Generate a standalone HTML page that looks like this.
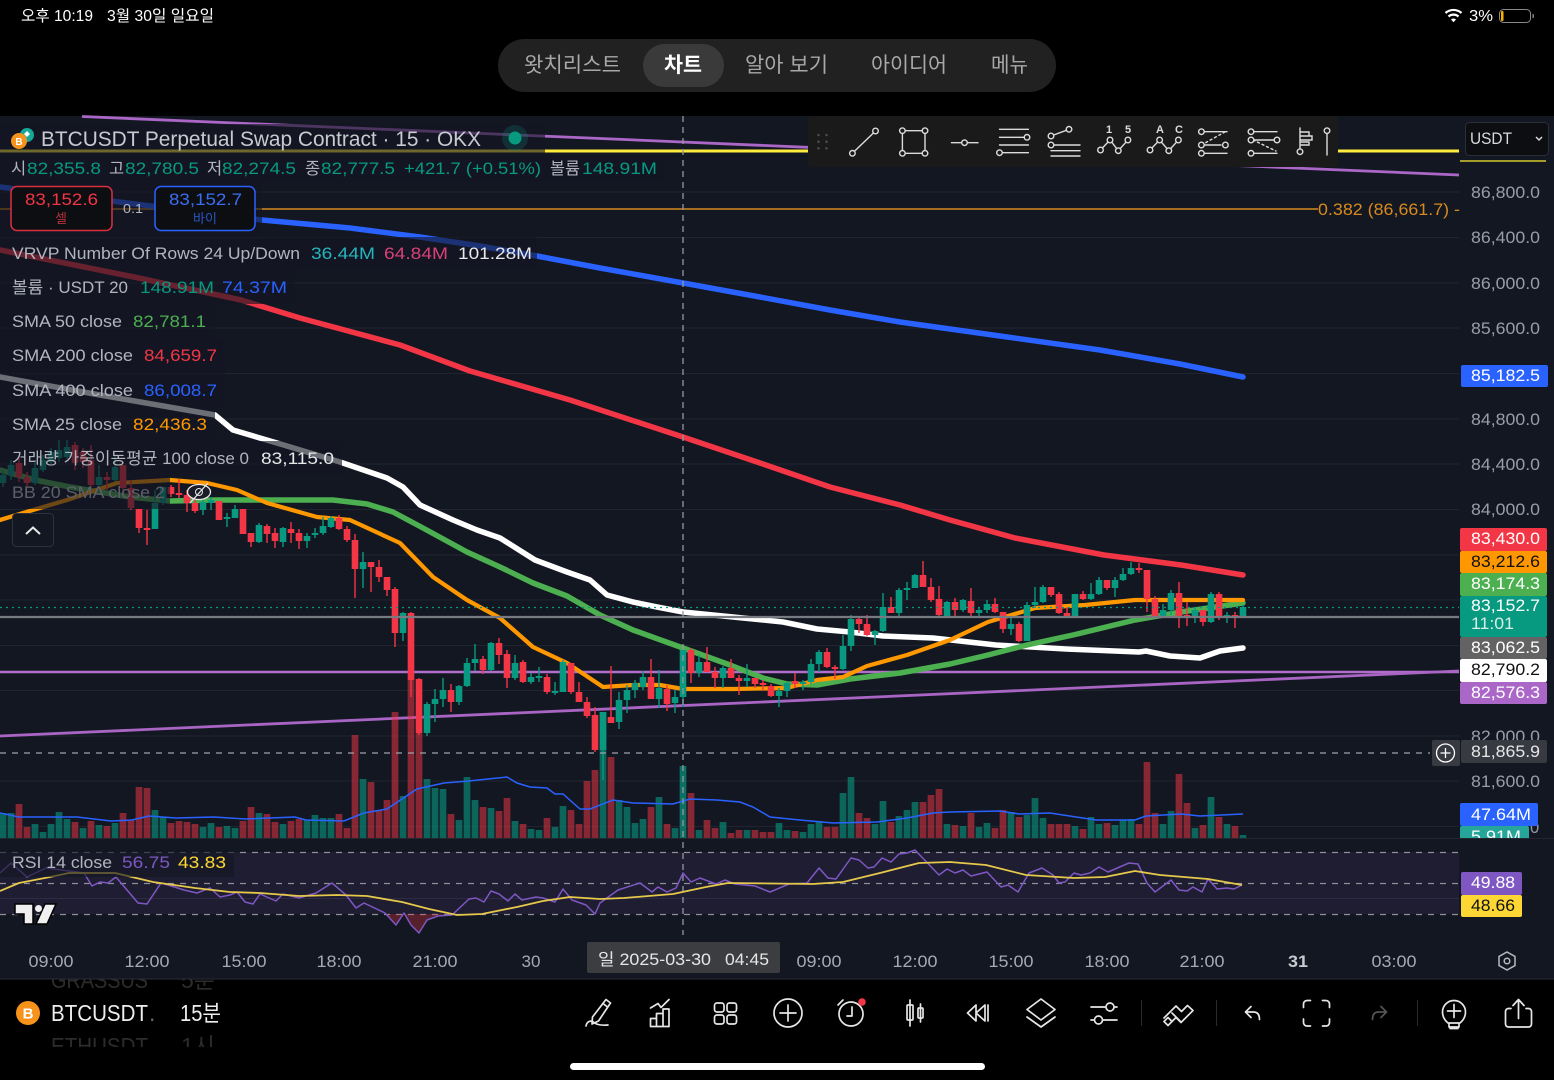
<!DOCTYPE html>
<html lang="ko"><head><meta charset="utf-8"><title>BTCUSDT</title>
<style>
html,body{margin:0;padding:0;background:#000;width:1554px;height:1080px;overflow:hidden}
svg{display:block}
text{font-family:"Liberation Sans","Noto Sans CJK KR",sans-serif}
.p{font-size:16.500px}
.l{font-size:16.500px;fill:#b2b5be}
.t{font-size:16.500px;fill:#a6a9b2;text-anchor:middle}
.i{fill:none;stroke:#e6e6e6;stroke-width:1.7;stroke-linecap:round;stroke-linejoin:round}
.d{fill:none;stroke:#dcdcdc;stroke-width:1.4;stroke-linecap:round}
.d circle,circle.c{fill:#1a1a1a}
</style></head><body>
<svg width="1554" height="1080" viewBox="0 0 1554 1080" xmlns="http://www.w3.org/2000/svg">
<defs><clipPath id="eth"><rect x="0" y="1030" width="400" height="17"/></clipPath></defs>
<rect width="1554" height="1080" fill="#000"/>

<!-- status bar -->
<text x="21" y="21" font-size="15.5" fill="#fff" textLength="72" lengthAdjust="spacingAndGlyphs">오후 10:19</text>
<text x="107" y="21" font-size="15.5" fill="#fff" textLength="107" lengthAdjust="spacingAndGlyphs">3월 30일 일요일</text>
<g fill="none" stroke="#fff" stroke-width="2.2" stroke-linecap="butt"><path d="M1445.500 13a12 12 0 0 1 16 0"/><path d="M1448.500 16.500a7.500 7.500 0 0 1 10 0"/></g><path d="M1451 19.500a3.500 3.500 0 0 1 5 0l-2.500 2.800z" fill="#fff"/>
<text x="1469" y="21" font-size="15.5" fill="#fff" textLength="24" lengthAdjust="spacingAndGlyphs">3%</text>
<rect x="1499.500" y="9.500" width="31" height="13" rx="4" fill="none" stroke="#8a8a8a"/><rect x="1501" y="11" width="2.500" height="10" rx="1" fill="#f5b400"/><path d="M1532.500 13.500v5a2.500 2.500 0 0 0 1.500-2.500 2.500 2.500 0 0 0-1.500-2.500z" fill="#8a8a8a"/>

<!-- nav -->
<rect x="498" y="39" width="558" height="53" rx="26.500" fill="#212121"/>
<rect x="643" y="44" width="81" height="43" rx="21.500" fill="#3a3a3a"/>
<text x="524" y="72" font-size="21" fill="#a8a8a8" textLength="97" lengthAdjust="spacingAndGlyphs">왓치리스트</text>
<text x="664" y="72" font-size="21" font-weight="bold" fill="#fff" textLength="38" lengthAdjust="spacingAndGlyphs">차트</text>
<text x="745" y="72" font-size="21" fill="#a8a8a8" textLength="83" lengthAdjust="spacingAndGlyphs">알아 보기</text>
<text x="871" y="72" font-size="21" fill="#a8a8a8" textLength="76" lengthAdjust="spacingAndGlyphs">아이디어</text>
<text x="991" y="72" font-size="21" fill="#a8a8a8" textLength="37" lengthAdjust="spacingAndGlyphs">메뉴</text>

<!-- lower dim list (behind chart) -->
<text x="51" y="988" font-size="23" fill="#2c2c2c" textLength="97" lengthAdjust="spacingAndGlyphs">GRASSUS</text><text x="181" y="988" font-size="23" fill="#2c2c2c">5분</text>

<!-- chart -->
<rect x="0" y="116" width="1554" height="863" fill="#131722"/>
<path d="M0 192H1459M0 237.500H1459M0 283H1459M0 328H1459M0 373.500H1459M0 419H1459M0 464H1459M0 509.500H1459M0 555H1459M0 600H1459M0 645.500H1459M0 690.500H1459M0 736H1459M0 781H1459M0 826.500H1459" stroke="#20242e" stroke-width="1"/>
<path d="M0 838.500H1554" stroke="#22262f" stroke-width="1"/>
<path d="M0 979H1554" stroke="#2a2e39" stroke-width="1"/>

<!-- RSI band -->
<rect x="0" y="852" width="1459" height="62" fill="#7e57c2" fill-opacity=".1"/>
<path d="M0 898.500H1459" stroke="#2c2a44"/>
<path d="M0 852.500H1459M0 883.500H1459M0 914.500H1459" stroke="#8d8f99" stroke-width="1.2" stroke-dasharray="6 6"/>

<!-- upper lines -->
<path d="M82 116.500L1459 175" stroke="#ab67c7" stroke-width="2.800"/>
<path d="M0 151H1459" stroke="#ffeb3b" stroke-width="3"/>
<path d="M1460 161H1546" stroke="#d7c92f" stroke-width="1.500"/>
<path d="M0 209H1318" stroke="#d68a1e" stroke-width="1.600"/>
<path d="M0 672H1459" stroke="#b06fcb" stroke-width="2.400"/>
<path d="M0 736L1459 671" stroke="#a965c4" stroke-width="2.800"/>

<!-- MAs -->
<g fill="none" stroke-linecap="round" stroke-linejoin="round">
<polyline stroke="#2962ff" stroke-width="5.500" points="0,187 262,220 350,228 420,237 480,246 537,256 600,268 683,283 760,297 830,310 900,322 1000,336 1100,350 1180,364 1243,377"/>
<polyline stroke="#f23645" stroke-width="5.500" points="0,250 134,277 241,300 300,318 400,345 470,371 570,400 683,437 760,463 830,487 900,505 950,520 1015,538 1104,555 1181,565 1243,575"/>
<polyline stroke="#ffffff" stroke-width="5.500" points="0,377 100,395 215,415 233,430 277,443 340,462 387,478 403,487 420,505 453,520 477,530 500,538 535,560 567,572 590,580 607,595 633,602 657,607 683,612 733,617 783,622 817,629 850,632 883,636 933,638 996,645 1066,649 1139,652 1146,651 1170,656 1200,658 1220,651 1243,648"/>
<polyline stroke="#4caf50" stroke-width="5.500" points="0,470 35,480 70,487 100,492 130,497 170,501 217,500 333,500 367,504 393,512 423,528 467,552 500,567 533,583 567,596 600,615 633,630 683,648 730,665 763,678 787,684 817,685 850,679 900,673 950,664 988,655 1027,645 1073,635 1135,620 1181,612 1243,603"/>
<polyline stroke="#ff9800" stroke-width="4.200" points="0,520 33,510 67,500 117,483 170,480 207,483 237,490 267,503 317,517 350,520 400,543 433,577 467,600 500,618 533,647 567,663 603,687 633,685 660,685 683,689 733,689 787,688 817,680 843,677 867,666 907,655 950,640 988,622 1035,608 1085,605 1135,600 1204,600 1243,600"/>
</g>

<!-- candles green -->
<path fill="none" stroke="#089981" stroke-width="1.400" d="M3 470V487M11 460V480M35 462V485M43 455V472M51 448V465M59 440V462M67 440V459M99 465V493M115 455V482M155 490V529M163 487V505M203 500V515M211 497V510M227 513V527M235 505V518M259 523V543M283 527V547M307 533V548M315 528V538M323 517V535M331 516V528M363 552V588M403 612V641M427 702V736M435 689V722M443 678V707M459 685V705M467 658V687M475 644V671M491 642V671M515 655V680M531 673V684M539 667V682M555 682V695M563 660V692M603 712V780M619 692V729M627 685V713M635 680V698M643 671V690M659 670V708M675 690V713M683 648V707M699 655V677M723 666V688M747 664V687M779 688V707M787 682V697M803 680V690M811 659V684M819 650V672M843 635V670M851 615V651M875 630V645M883 593V632M899 588V618M907 582V600M915 574V588M947 601V618M963 599V612M979 608V616M987 600V613M1011 618V635M1027 602V641M1035 587V608M1043 585V603M1075 594V616M1091 583V600M1099 577V595M1115 577V597M1123 568V581M1131 562V575M1163 604V617M1171 590V615M1195 607V623M1211 592V623M1227 612V623M1243 605V617"/>
<path fill="none" stroke="#089981" stroke-width="6.600" d="M3 475V483M11 465V475M35 468V483M43 460V470M51 452V462M59 450V458M67 447V457M99 477V485M115 467V480M155 503V529M163 487V503M203 502V510M211 500V503M227 517V519M235 509V518M259 525V542M283 528V542M307 536V541M315 533V535M323 526V533M331 518V527M363 562V569M403 613V633M427 704V733M435 699V704M443 690V699M459 686V702M467 663V686M475 659V663M491 643V670M515 663V678M531 677V682M539 676V678M555 691V693M563 662V692M603 712V750M619 700V722M627 690V700M635 683V690M643 677V687M659 688V699M675 697V703M683 650V697M699 662V673M723 668V678M747 678V681M779 691V696M787 683V691M803 682V684M811 664V682M819 652V664M843 646V669M851 619V646M875 631V635M883 607V631M899 590V613M907 588V590M915 575V588M947 602V617M963 600V610M979 610V613M987 604V610M1011 624V629M1027 605V641M1035 602V605M1043 587V602M1075 594V616M1091 594V599M1099 580V594M1115 580V588M1123 574V580M1131 568V574M1163 610V616M1171 593V610M1195 610V616M1211 594V622M1227 615V617M1243 607V616"/>
<!-- candles red -->
<path fill="none" stroke="#f23645" stroke-width="1.400" d="M19 455V482M27 472V487M75 442V470M83 448V468M91 445V487M107 472V490M123 465V490M131 480V510M139 509V533M147 510V545M171 485V497M179 479V498M187 490V512M195 492V513M219 501V520M243 509V534M251 533V547M267 524V543M275 528V548M291 522V543M299 529V549M339 515V530M347 526V542M355 534V598M371 562V592M379 560V582M387 577V596M395 587V647M411 612V697M419 678V735M451 684V712M483 656V674M499 638V664M507 650V688M523 660V683M547 674V694M571 663V694M579 682V702M587 697V718M595 707V752M611 666V723M651 659V699M667 685V711M691 648V683M707 647V672M715 667V688M731 659V678M739 675V695M755 678V688M763 680V690M771 684V697M795 673V688M827 648V668M835 665V679M859 616V633M867 615V636M891 597V613M923 561V587M931 578V602M939 586V617M955 598V616M971 588V616M995 598V613M1003 612V633M1019 622V642M1051 587V597M1059 592V614M1067 607V617M1083 591V600M1107 580V590M1139 563V573M1147 570V612M1155 596V617M1179 582V628M1187 602V626M1203 610V626M1219 592V620M1235 612V628"/>
<path fill="none" stroke="#f23645" stroke-width="6.600" d="M19 463V477M27 477V483M75 445V463M83 452V462M91 460V485M107 477V480M123 465V488M131 488V508M139 509V528M147 528V530M171 487V494M179 493V495M187 495V503M195 503V511M219 501V520M243 509V534M251 533V542M267 526V534M275 533V541M291 529V533M299 533V541M339 518V529M347 529V540M355 540V569M371 562V567M379 567V577M387 577V590M395 589V633M411 613V680M419 679V733M451 690V702M483 659V670M499 643V655M507 654V678M523 662V682M547 677V692M571 663V692M579 692V702M587 702V716M595 715V750M611 717V723M651 677V699M667 689V704M691 650V673M707 662V672M715 672V678M731 668V678M739 678V681M755 678V684M763 683V685M771 686V696M795 681V684M827 652V667M835 667V669M859 619V624M867 624V635M891 607V613M923 575V587M931 587V600M939 599V615M955 602V610M971 601V613M995 604V612M1003 612V629M1019 624V641M1051 587V595M1059 594V613M1067 613V616M1083 594V599M1107 580V588M1139 568V570M1147 570V599M1155 599V616M1179 593V616M1187 615V617M1203 610V622M1219 594V618M1235 615V617"/>

<!-- volume green -->
<path fill="none" stroke="#089981" stroke-opacity=".6" stroke-width="6.700" d="M3 838V813M11 838V813M35 838V824M43 838V832M51 838V824M59 838V812M67 838V819M83 838V828M99 838V825M115 838V823M155 838V810M163 838V817M203 838V827M211 838V823M227 838V826M235 838V828M259 838V813M283 838V824M307 838V820M315 838V815M323 838V818M331 838V818M363 838V779M403 838V796M427 838V779M435 838V788M443 838V789M459 838V820M467 838V777M475 838V800M491 838V808M515 838V821M531 838V829M539 838V830M555 838V827M563 838V806M603 838V712M619 838V800M627 838V807M635 838V823M643 838V819M659 838V797M675 838V828M699 838V830M723 838V822M747 838V830M779 838V823M787 838V830M803 838V832M811 838V824M819 838V821M843 838V793M851 838V777M875 838V824M883 838V801M899 838V816M907 838V810M915 838V802M947 838V824M963 838V826M979 838V827M987 838V823M1011 838V812M1027 838V815M1035 838V798M1043 838V818M1075 838V826M1091 838V817M1099 838V824M1115 838V825M1123 838V820M1131 838V819M1163 838V824M1171 838V811M1195 838V828M1211 838V797M1227 838V824M1243 838V835"/>
<path fill="none" stroke="#089981" stroke-opacity=".7" stroke-width="6.700" d="M683 838V766"/>
<!-- volume red -->
<path fill="none" stroke="#f23645" stroke-opacity=".52" stroke-width="6.700" d="M19 838V804M27 838V827M75 838V822M91 838V821M107 838V826M123 838V813M131 838V820M139 838V787M147 838V788M171 838V823M179 838V821M187 838V822M195 838V824M219 838V827M243 838V821M251 838V807M267 838V814M275 838V822M291 838V821M299 838V819M339 838V814M347 838V828M355 838V735M371 838V782M379 838V810M387 838V800M395 838V712M411 838V680M419 838V733M451 838V814M483 838V807M499 838V811M507 838V798M523 838V824M547 838V818M571 838V810M579 838V824M587 838V781M595 838V770M611 838V757M651 838V807M667 838V824M691 838V793M707 838V820M715 838V828M731 838V833M739 838V830M755 838V830M763 838V832M771 838V832M795 838V831M827 838V827M835 838V827M859 838V813M867 838V818M891 838V822M923 838V802M931 838V795M939 838V789M955 838V825M971 838V813M995 838V828M1003 838V810M1019 838V817M1051 838V824M1059 838V824M1067 838V824M1083 838V829M1107 838V823M1139 838V824M1147 838V762M1155 838V813M1179 838V774M1187 838V803M1203 838V825M1219 838V817M1235 838V826"/>
<!-- volume MA -->
<polyline fill="none" stroke="#2962ff" stroke-width="1.500" points="0,813 19,817 50,817 77,817 111,821 132,820 149,816 176,818 214,817 245,819 295,817 306,820 344,821 364,813 387,809 417,789 444,783 469,781 507,777 517,783 530,787 547,788 555,794 563,794 580,809 590,809 613,800 633,803 673,804 690,799 717,800 740,802 753,807 770,817 800,820 833,823 877,822 907,818 933,813 950,812 1000,811 1019,814 1050,813 1096,820 1135,820 1146,816 1181,814 1200,816 1243,814"/>

<!-- horizontal overlays -->
<path d="M0 607.500H1459" stroke="#089981" stroke-width="1.200" stroke-dasharray="2 4"/>
<path d="M0 617H1459" stroke="#777a80" stroke-width="2.200"/>
<path d="M0 753H1430" stroke="#a0a3ab" stroke-width="1.300" stroke-dasharray="6 6"/>
<path d="M683 116V935" stroke="#9598a1" stroke-width="1.300" stroke-dasharray="6 5"/>

<!-- RSI -->
<path d="M385 914L396 925 404 914 411 925 419 933 427 920 438 916 445 914Z" fill="#f23645" fill-opacity=".3"/>
<polyline fill="none" stroke="#7e57c2" stroke-width="1.500" stroke-linejoin="round" points="0,873 11,863 27,877 46,868 77,872 84,873 92,886 100,882 108,883 116,877 138,903 147,904 161,883 168,885 184,890 197,893 210,888 220,897 230,895 237,892 245,902 253,904 260,894 276,901 283,894 299,898 316,893 332,883 346,895 356,908 364,903 385,913 396,925 404,913 411,925 419,933 427,920 438,916 452,915 469,899 476,898 484,902 491,891 499,894 508,901 515,894 522,900 536,897 543,898 555,902 563,889 572,900 586,905 595,914 600,903 618,890 640,883 652,892 658,887 667,892 676,888 683,873 691,882 700,878 716,884 725,880 735,884 755,886 770,892 789,884 807,883 819,868 828,878 836,879 851,858 859,860 868,868 874,867 882,858 891,862 899,854 907,853 915,850 939,875 947,869 955,873 963,870 971,876 987,872 1001,887 1008,885 1018,892 1029,873 1042,868 1053,875 1059,883 1065,882 1074,873 1081,875 1090,873 1099,867 1108,872 1129,863 1138,864 1147,883 1155,892 1171,880 1179,890 1187,891 1193,887 1202,892 1208,879 1217,889 1227,888 1234,889 1242,885"/>
<polyline fill="none" stroke="#e6c84a" stroke-width="1.800" stroke-linejoin="round" points="0,891 19,883 50,877 69,873 115,873 153,882 195,888 230,892 260,893 299,896 337,895 367,896 402,902 429,909 457,915 482,914 517,907 543,901 570,897 600,899 624,898 673,894 706,887 728,883 813,884 843,882 880,873 919,863 950,862 986,865 1026,875 1074,878 1105,877 1135,871 1160,875 1208,879 1242,885"/>

<!-- legend dim -->
<g fill="#131722" fill-opacity=".62">
<rect x="0" y="124" width="545" height="32"/><rect x="0" y="156" width="665" height="26"/>
<rect x="0" y="182" width="262" height="55"/>
<rect x="0" y="237" width="537" height="33"/><rect x="0" y="270" width="295" height="34"/>
<rect x="0" y="304" width="215" height="34"/><rect x="0" y="338" width="225" height="34"/>
<rect x="0" y="372" width="225" height="35"/><rect x="0" y="407" width="215" height="34"/>
<rect x="0" y="441" width="342" height="34"/><rect x="0" y="475" width="170" height="34"/>
<rect x="0" y="850" width="234" height="27"/>
</g>

<!-- title -->
<circle cx="27" cy="135" r="7" fill="#17a69a"/><path d="M24 134l3-3 3 3-3 3z" fill="#fff"/>
<circle cx="19" cy="141" r="8" fill="#f7931a"/><text x="19" y="145" font-size="10" font-weight="bold" fill="#fff" text-anchor="middle">B</text>
<text x="41" y="146" font-size="21" fill="#c8cad0" textLength="440" lengthAdjust="spacingAndGlyphs">BTCUSDT Perpetual Swap Contract · 15 · OKX</text>
<circle cx="515" cy="138" r="13" fill="#089981" fill-opacity=".2"/><circle cx="515" cy="138" r="6.500" fill="#089981"/>

<!-- OHLC -->
<g class="l"><text x="11" y="174" class="l">시</text><text x="109" y="174" class="l">고</text><text x="207" y="174" class="l">저</text><text x="305" y="174" class="l">종</text><text x="550" y="174" class="l" textLength="30" lengthAdjust="spacingAndGlyphs">볼륨</text></g>
<g fill="#089981" font-size="17"><text x="27" y="174" textLength="74" lengthAdjust="spacingAndGlyphs">82,355.8</text><text x="125" y="174" textLength="74" lengthAdjust="spacingAndGlyphs">82,780.5</text><text x="222" y="174" textLength="74" lengthAdjust="spacingAndGlyphs">82,274.5</text><text x="321" y="174" textLength="74" lengthAdjust="spacingAndGlyphs">82,777.5</text><text x="404" y="174" textLength="137" lengthAdjust="spacingAndGlyphs">+421.7 (+0.51%)</text><text x="582" y="174" textLength="75" lengthAdjust="spacingAndGlyphs">148.91M</text></g>

<!-- badges -->
<rect x="11" y="186.500" width="101" height="44" rx="6" fill="#0d0e12" stroke="#d8303f" stroke-width="1.500"/>
<text x="25" y="205" class="p" fill="#f23645" textLength="73" lengthAdjust="spacingAndGlyphs">83,152.6</text>
<text x="61" y="223" font-size="13" fill="#b8303c" text-anchor="middle">셀</text>
<text x="123" y="213" font-size="13" fill="#b2b5be" textLength="20" lengthAdjust="spacingAndGlyphs">0.1</text>
<rect x="155" y="186.500" width="100" height="44" rx="6" fill="#0d0e12" stroke="#2962ff" stroke-width="1.500"/>
<text x="169" y="205" class="p" fill="#3b6df0" textLength="73" lengthAdjust="spacingAndGlyphs">83,152.7</text>
<text x="205" y="223" font-size="13" fill="#2a55c4" text-anchor="middle">바이</text>

<!-- legend rows -->
<text x="12" y="259" class="l" textLength="288" lengthAdjust="spacingAndGlyphs">VRVP Number Of Rows 24 Up/Down</text>
<text x="311" y="259" class="p" fill="#26b5bf" textLength="64" lengthAdjust="spacingAndGlyphs">36.44M</text><text x="384" y="259" class="p" fill="#d9407a" textLength="64" lengthAdjust="spacingAndGlyphs">64.84M</text><text x="458" y="259" class="p" fill="#e8e8ea" textLength="74" lengthAdjust="spacingAndGlyphs">101.28M</text>
<text x="12" y="293" class="l" textLength="116" lengthAdjust="spacingAndGlyphs">볼륨 · USDT 20</text>
<text x="140" y="293" class="p" fill="#089981" textLength="74" lengthAdjust="spacingAndGlyphs">148.91M</text><text x="222" y="293" class="p" fill="#2962ff" textLength="65" lengthAdjust="spacingAndGlyphs">74.37M</text>
<text x="12" y="327" class="l" textLength="110" lengthAdjust="spacingAndGlyphs">SMA 50 close</text><text x="133" y="327" class="p" fill="#4caf50" textLength="73" lengthAdjust="spacingAndGlyphs">82,781.1</text>
<text x="12" y="361" class="l" textLength="121" lengthAdjust="spacingAndGlyphs">SMA 200 close</text><text x="144" y="361" class="p" fill="#f23645" textLength="73" lengthAdjust="spacingAndGlyphs">84,659.7</text>
<text x="12" y="396" class="l" textLength="121" lengthAdjust="spacingAndGlyphs">SMA 400 close</text><text x="144" y="396" class="p" fill="#2962ff" textLength="73" lengthAdjust="spacingAndGlyphs">86,008.7</text>
<text x="12" y="430" class="l" textLength="110" lengthAdjust="spacingAndGlyphs">SMA 25 close</text><text x="133" y="430" class="p" fill="#ff9800" textLength="74" lengthAdjust="spacingAndGlyphs">82,436.3</text>
<text x="12" y="464" class="l" textLength="237" lengthAdjust="spacingAndGlyphs">거래량 가중이동평균 100 close 0</text><text x="261" y="464" class="p" fill="#e8e8ea" textLength="73" lengthAdjust="spacingAndGlyphs">83,115.0</text>
<text x="12" y="498" class="l" style="fill:#5d6069" textLength="153" lengthAdjust="spacingAndGlyphs">BB 20 SMA close 2</text>
<!-- eye off -->
<ellipse cx="199" cy="492" rx="11.500" ry="7.500" fill="#1a1d27" stroke="#e8e8e8" stroke-width="1.300"/><circle cx="199" cy="492" r="3.500" fill="none" stroke="#e8e8e8"/><path d="M190 503L208 483" stroke="#e8e8e8" stroke-width="1.300"/>
<!-- collapse -->
<rect x="12.500" y="513.500" width="41" height="33" rx="4" fill="#131722" stroke="#2e323c"/><path d="M26 534l7-6.500 7 6.500" fill="none" stroke="#e8e8e8" stroke-width="2"/>

<!-- RSI legend -->
<text x="12" y="868" class="l" textLength="100" lengthAdjust="spacingAndGlyphs">RSI 14 close</text><text x="122" y="868" class="p" fill="#7e57c2" textLength="48" lengthAdjust="spacingAndGlyphs">56.75</text><text x="178" y="868" class="p" fill="#fdd835" textLength="48" lengthAdjust="spacingAndGlyphs">43.83</text>
<!-- logo -->
<path d="M15 904H33V924H24V914H15Z M45 904H56L47 924H36Z" fill="#f0f0f0" stroke="#000" stroke-width="1.500"/><circle cx="38.500" cy="908.500" r="3.500" fill="#f0f0f0"/>

<!-- axis -->
<g class="p" fill="#9a9da6">
<text x="1471" y="198" textLength="69" lengthAdjust="spacingAndGlyphs">86,800.0</text><text x="1471" y="243" textLength="69" lengthAdjust="spacingAndGlyphs">86,400.0</text><text x="1471" y="289" textLength="69" lengthAdjust="spacingAndGlyphs">86,000.0</text><text x="1471" y="334" textLength="69" lengthAdjust="spacingAndGlyphs">85,600.0</text><text x="1471" y="425" textLength="69" lengthAdjust="spacingAndGlyphs">84,800.0</text><text x="1471" y="470" textLength="69" lengthAdjust="spacingAndGlyphs">84,400.0</text><text x="1471" y="515" textLength="69" lengthAdjust="spacingAndGlyphs">84,000.0</text><text x="1471" y="742" textLength="69" lengthAdjust="spacingAndGlyphs">82,000.0</text><text x="1471" y="787" textLength="69" lengthAdjust="spacingAndGlyphs">81,600.0</text><text x="1530" y="833">0</text>
</g>
<text x="1318" y="215" class="p" fill="#d68a1e" textLength="142" lengthAdjust="spacingAndGlyphs">0.382 (86,661.7) -</text>

<!-- tags -->
<rect x="1461" y="365" width="87" height="22" rx="2" fill="#2962ff"/><text x="1471" y="381" class="p" fill="#fff" textLength="69" lengthAdjust="spacingAndGlyphs">85,182.5</text>
<rect x="1460" y="528" width="87" height="23" rx="2" fill="#f23645"/><text x="1471" y="544" class="p" fill="#fff" textLength="69" lengthAdjust="spacingAndGlyphs">83,430.0</text>
<rect x="1460" y="551" width="87" height="22" rx="2" fill="#ff9800"/><text x="1471" y="567" class="p" fill="#111" textLength="69" lengthAdjust="spacingAndGlyphs">83,212.6</text>
<rect x="1460" y="573" width="87" height="23" rx="2" fill="#4caf50"/><text x="1471" y="589" class="p" fill="#fff" textLength="69" lengthAdjust="spacingAndGlyphs">83,174.3</text>
<rect x="1460" y="596" width="87" height="41" rx="2" fill="#089981"/><text x="1471" y="611" class="p" fill="#fff" textLength="69" lengthAdjust="spacingAndGlyphs">83,152.7</text><text x="1471" y="629" class="p" fill="#d7efe9" textLength="43" lengthAdjust="spacingAndGlyphs">11:01</text>
<rect x="1460" y="637" width="87" height="22" rx="2" fill="#636363"/><text x="1471" y="653" class="p" fill="#fff" textLength="69" lengthAdjust="spacingAndGlyphs">83,062.5</text>
<rect x="1460" y="659" width="87" height="23" rx="2" fill="#fff"/><text x="1471" y="675" class="p" fill="#111" textLength="69" lengthAdjust="spacingAndGlyphs">82,790.2</text>
<rect x="1460" y="682" width="87" height="22" rx="2" fill="#ab67c7"/><text x="1471" y="698" class="p" fill="#fff" textLength="69" lengthAdjust="spacingAndGlyphs">82,576.3</text>
<rect x="1461" y="740" width="86" height="23" rx="2" fill="#373a40"/><text x="1471" y="757" class="p" fill="#e6e6e6" textLength="69" lengthAdjust="spacingAndGlyphs">81,865.9</text>
<rect x="1432" y="740" width="28" height="26" rx="2" fill="#373a40"/><circle cx="1445.500" cy="753" r="9" fill="none" stroke="#fff" stroke-width="1.300"/><path d="M1445.500 748v10M1440.500 753h10" stroke="#fff" stroke-width="1.300"/>
<rect x="1460" y="803" width="78" height="23" rx="2" fill="#2962ff"/><text x="1471" y="820" class="p" fill="#fff" textLength="60" lengthAdjust="spacingAndGlyphs">47.64M</text>
<clipPath id="vc"><rect x="1460" y="826" width="80" height="12"/></clipPath>
<g clip-path="url(#vc)"><rect x="1460" y="826" width="69" height="20" rx="2" fill="#26a69a"/><text x="1471" y="842" class="p" fill="#fff" textLength="50" lengthAdjust="spacingAndGlyphs">5.91M</text></g>
<rect x="1461" y="872" width="61" height="23" rx="2" fill="#7e57c2"/><text x="1471" y="888" class="p" fill="#fff" textLength="44" lengthAdjust="spacingAndGlyphs">49.88</text>
<rect x="1461" y="895" width="61" height="22" rx="2" fill="#fdd835"/><text x="1471" y="911" class="p" fill="#111" textLength="44" lengthAdjust="spacingAndGlyphs">48.66</text>

<!-- USDT -->
<rect x="1465.500" y="122.500" width="83" height="33" rx="4" fill="#0d0e12" stroke="#2a2e39"/>
<text x="1470" y="144" class="p" fill="#d8d9dc" textLength="42" lengthAdjust="spacingAndGlyphs">USDT</text><path d="M1536 137l3 3 3-3" fill="none" stroke="#d8d9dc" stroke-width="1.500"/>

<!-- drawing toolbar -->
<rect x="808" y="116" width="530" height="51" rx="3" fill="#1a1a1a"/>
<g fill="#4a4a4a"><circle cx="818.500" cy="135" r="1.300"/><circle cx="826.500" cy="135" r="1.300"/><circle cx="818.500" cy="141.700" r="1.300"/><circle cx="826.500" cy="141.700" r="1.300"/><circle cx="818.500" cy="148.300" r="1.300"/><circle cx="826.500" cy="148.300" r="1.300"/></g>
<g class="d">
<path d="M852.400 153.300L875.500 131"/><circle cx="875.500" cy="131" r="2.800"/><circle cx="852.400" cy="153.300" r="2.800"/>
<path d="M902.400 130.700H925V153.300H902.400Z"/><circle cx="902.400" cy="130.700" r="2.800"/><circle cx="925" cy="130.700" r="2.800"/><circle cx="902.400" cy="153.300" r="2.800"/><circle cx="925" cy="153.300" r="2.800"/>
<path d="M951.500 142.700H978"/><circle cx="964.500" cy="142.700" r="2.800"/>
<path d="M999.500 129.300H1028.400M999.500 137.300H1024M999.500 145H1028.400M1002 152.700H1028.400"/><circle cx="1027" cy="137.300" r="2.800"/><circle cx="999.500" cy="152.700" r="2.800"/>
<path d="M1051 136L1069 129.300M1051 145H1080M1051 150.700H1080M1051 156H1080"/><circle cx="1069" cy="129.300" r="2.800"/><circle cx="1051" cy="136" r="2.800"/><circle cx="1051" cy="145" r="2.800"/>
<path d="M1100.500 150L1110 140 1118.300 150.700 1127.900 140"/><circle cx="1100.500" cy="150" r="2.800"/><circle cx="1110" cy="140" r="2.800"/><circle cx="1118.300" cy="150.700" r="2.800"/><circle cx="1127.900" cy="140" r="2.800"/>
<path d="M1150 150L1159.600 140 1168.800 150.700 1178.400 140"/><circle cx="1150" cy="150" r="2.800"/><circle cx="1159.600" cy="140" r="2.800"/><circle cx="1168.800" cy="150.700" r="2.800"/><circle cx="1178.400" cy="140" r="2.800"/>
<path d="M1204 131.700H1227M1201.400 145H1221M1204 153.300H1227"/><path d="M1201.400 145L1225.400 131.700" stroke-dasharray="2 3"/><circle cx="1201.400" cy="131.700" r="2.800"/><circle cx="1201.400" cy="145" r="2.800"/><circle cx="1225.400" cy="145" r="2.800"/><circle cx="1201.400" cy="153.300" r="2.800"/>
<path d="M1253 131.700H1277M1251 140H1275M1254 153.300H1277"/><path d="M1253 140L1276 151" stroke-dasharray="2 3"/><circle cx="1251" cy="131.700" r="2.800"/><circle cx="1251" cy="140" r="2.800"/><circle cx="1277" cy="140" r="2.800"/><circle cx="1251" cy="153.300" r="2.800"/>
<path d="M1300 128V149M1300 132H1309V136H1300M1300 136H1312V140H1300M1300 142H1309V145H1300"/><circle cx="1300" cy="151.700" r="2.800"/>
<path d="M1327 133.500V155"/><circle cx="1327" cy="130.700" r="2.800"/>
</g>
<g font-size="11" font-weight="bold" fill="#dcdcdc" text-anchor="middle"><text x="1109" y="133">1</text><text x="1128" y="133">5</text><text x="1160" y="133">A</text><text x="1179" y="133">C</text></g>

<!-- time axis -->
<text x="51" y="967" class="t" textLength="45" lengthAdjust="spacingAndGlyphs">09:00</text><text x="147" y="967" class="t" textLength="45" lengthAdjust="spacingAndGlyphs">12:00</text><text x="244" y="967" class="t" textLength="45" lengthAdjust="spacingAndGlyphs">15:00</text><text x="339" y="967" class="t" textLength="45" lengthAdjust="spacingAndGlyphs">18:00</text><text x="435" y="967" class="t" textLength="45" lengthAdjust="spacingAndGlyphs">21:00</text><text x="531" y="967" class="t" textLength="19" lengthAdjust="spacingAndGlyphs">30</text>
<rect x="587" y="942" width="193" height="31" rx="2" fill="#3c3d40"/><text x="598" y="965" font-size="16.500" fill="#e6e6e6" textLength="113" lengthAdjust="spacingAndGlyphs">일 2025-03-30</text><text x="725" y="965" font-size="16.500" fill="#e6e6e6" textLength="44" lengthAdjust="spacingAndGlyphs">04:45</text>
<text x="819" y="967" class="t" textLength="45" lengthAdjust="spacingAndGlyphs">09:00</text><text x="915" y="967" class="t" textLength="45" lengthAdjust="spacingAndGlyphs">12:00</text><text x="1011" y="967" class="t" textLength="45" lengthAdjust="spacingAndGlyphs">15:00</text><text x="1107" y="967" class="t" textLength="45" lengthAdjust="spacingAndGlyphs">18:00</text><text x="1202" y="967" class="t" textLength="45" lengthAdjust="spacingAndGlyphs">21:00</text><text x="1298" y="967" class="t" font-weight="bold" style="fill:#c8cad0" textLength="20" lengthAdjust="spacingAndGlyphs">31</text><text x="1394" y="967" class="t" textLength="45" lengthAdjust="spacingAndGlyphs">03:00</text>
<path d="M1507 952l8 4.500v9l-8 4.500-8-4.500v-9z" fill="none" stroke="#b8bac0" stroke-width="1.500"/><circle cx="1507" cy="961" r="2.800" fill="none" stroke="#b8bac0" stroke-width="1.500"/>

<!-- bottom bar -->
<circle cx="28" cy="1013" r="12" fill="#f7931a"/><text x="28" y="1018.500" font-size="15" font-weight="bold" fill="#fff" text-anchor="middle">B</text>
<text x="51" y="1021" font-size="23" fill="#eeeeee" textLength="97" lengthAdjust="spacingAndGlyphs">BTCUSDT</text><text x="149" y="1021" font-size="23" fill="#666">.</text>
<text x="180" y="1021" font-size="23" fill="#eeeeee" textLength="41" lengthAdjust="spacingAndGlyphs">15분</text>
<g clip-path="url(#eth)"><text x="51" y="1054" font-size="23" fill="#2c2c2c" textLength="97" lengthAdjust="spacingAndGlyphs">ETHUSDT</text><text x="181" y="1054" font-size="23" fill="#2c2c2c">1시</text></g>

<g class="i">
<path d="M606 999.500l4.500 3.500-12 18-6.500 3 .5-7zM603 1003.500l4.500 3.500"/><path d="M586 1026c1-5 5-6 8-3.500s8 3 14 2.500"/>
<path d="M650.500 1018.500h6v8h-6zM656.500 1013.500h6.500v13h-6.500zM663 1009h6v17.500h-6z"/><path d="M650.500 1008l7.500-4.500 3 4 8-8"/>
<rect x="714.500" y="1003" width="9.500" height="9" rx="2.500"/><rect x="727" y="1003" width="9.500" height="9" rx="2.500"/><rect x="714.500" y="1015" width="9.500" height="9" rx="2.500"/><rect x="727" y="1015" width="9.500" height="9" rx="2.500"/>
<circle cx="788" cy="1013" r="14"/><path d="M788 1005v16M780 1013h16"/>
<circle cx="851" cy="1014" r="12"/><path d="M852 1007v9h-5M838 1005l5-5"/>
<path d="M910 1000v26M920.500 1004v18"/><rect x="907" y="1005" width="6" height="15" rx="1"/><rect x="918" y="1008" width="5" height="10" rx="1"/>
<path d="M967.500 1013l8.500-8v16zM976 1013l9-8v16zM988 1005v16"/>
<path d="M1041 999l14 10.500-14 10.500-14-10.500z"/><path d="M1027 1017l14 10 14-10"/>
<path d="M1091 1007h14M1115 1007h2M1091 1020h3M1103 1020h14"/><circle cx="1110" cy="1007" r="4"/><circle cx="1098.500" cy="1020" r="4"/>
<path d="M1164 1018l12-12 5.500 5.500 6-6 5.500 5-12 12-5-5-6 6 1-1-3 3-4-4 4-4 4 4M1172 1013l8 8"/>
</g>
<path d="M1141.500 1000v26M1216.500 1000v26M1417.500 1000v26" stroke="#2a2a2a"/>
<g class="i">
<path d="M1259.500 1019.500c0-5-2-7.500-6-7.500h-7.500M1251 1006.500l-5.500 5.500 5.500 5.500"/>
<path d="M1303.500 1007.500v-3.500a3.500 3.500 0 0 1 3.500-3.500h3.500M1322.500 1000.500h3.500a3.500 3.500 0 0 1 3.500 3.500v3.500M1303.500 1019v3.500a3.500 3.500 0 0 0 3.500 3.500h3.500M1322.500 1026h3.500a3.500 3.500 0 0 0 3.500-3.500v-3.500"/>
<path d="M1372.500 1019.500c0-5 2-7.500 6-7.500h7.500M1381 1006.500l5.500 5.500-5.500 5.500" style="stroke:#555"/>
<path d="M1448 1023c-3-2.500-5.500-6.500-5.500-11a11.500 11.500 0 0 1 23 0c0 4.500-2.500 8.500-5.500 11zM1449 1023v4h10v-4M1450 1027v1.500h8v-1.500M1454 1004.500v13M1447.500 1011h13"/>
<path d="M1511 1008.500h-2.500a3 3 0 0 0-3 3v12.500a3 3 0 0 0 3 3h20a3 3 0 0 0 3-3v-12.500a3 3 0 0 0-3-3H1526M1518.500 1018.500V1000M1513 1005.500l5.500-6 5.500 6"/>
</g>
<circle cx="862" cy="1002" r="3.800" fill="#f23645"/>
<rect x="570" y="1063" width="415" height="7" rx="3.500" fill="#fff"/>
</svg>
</body></html>
